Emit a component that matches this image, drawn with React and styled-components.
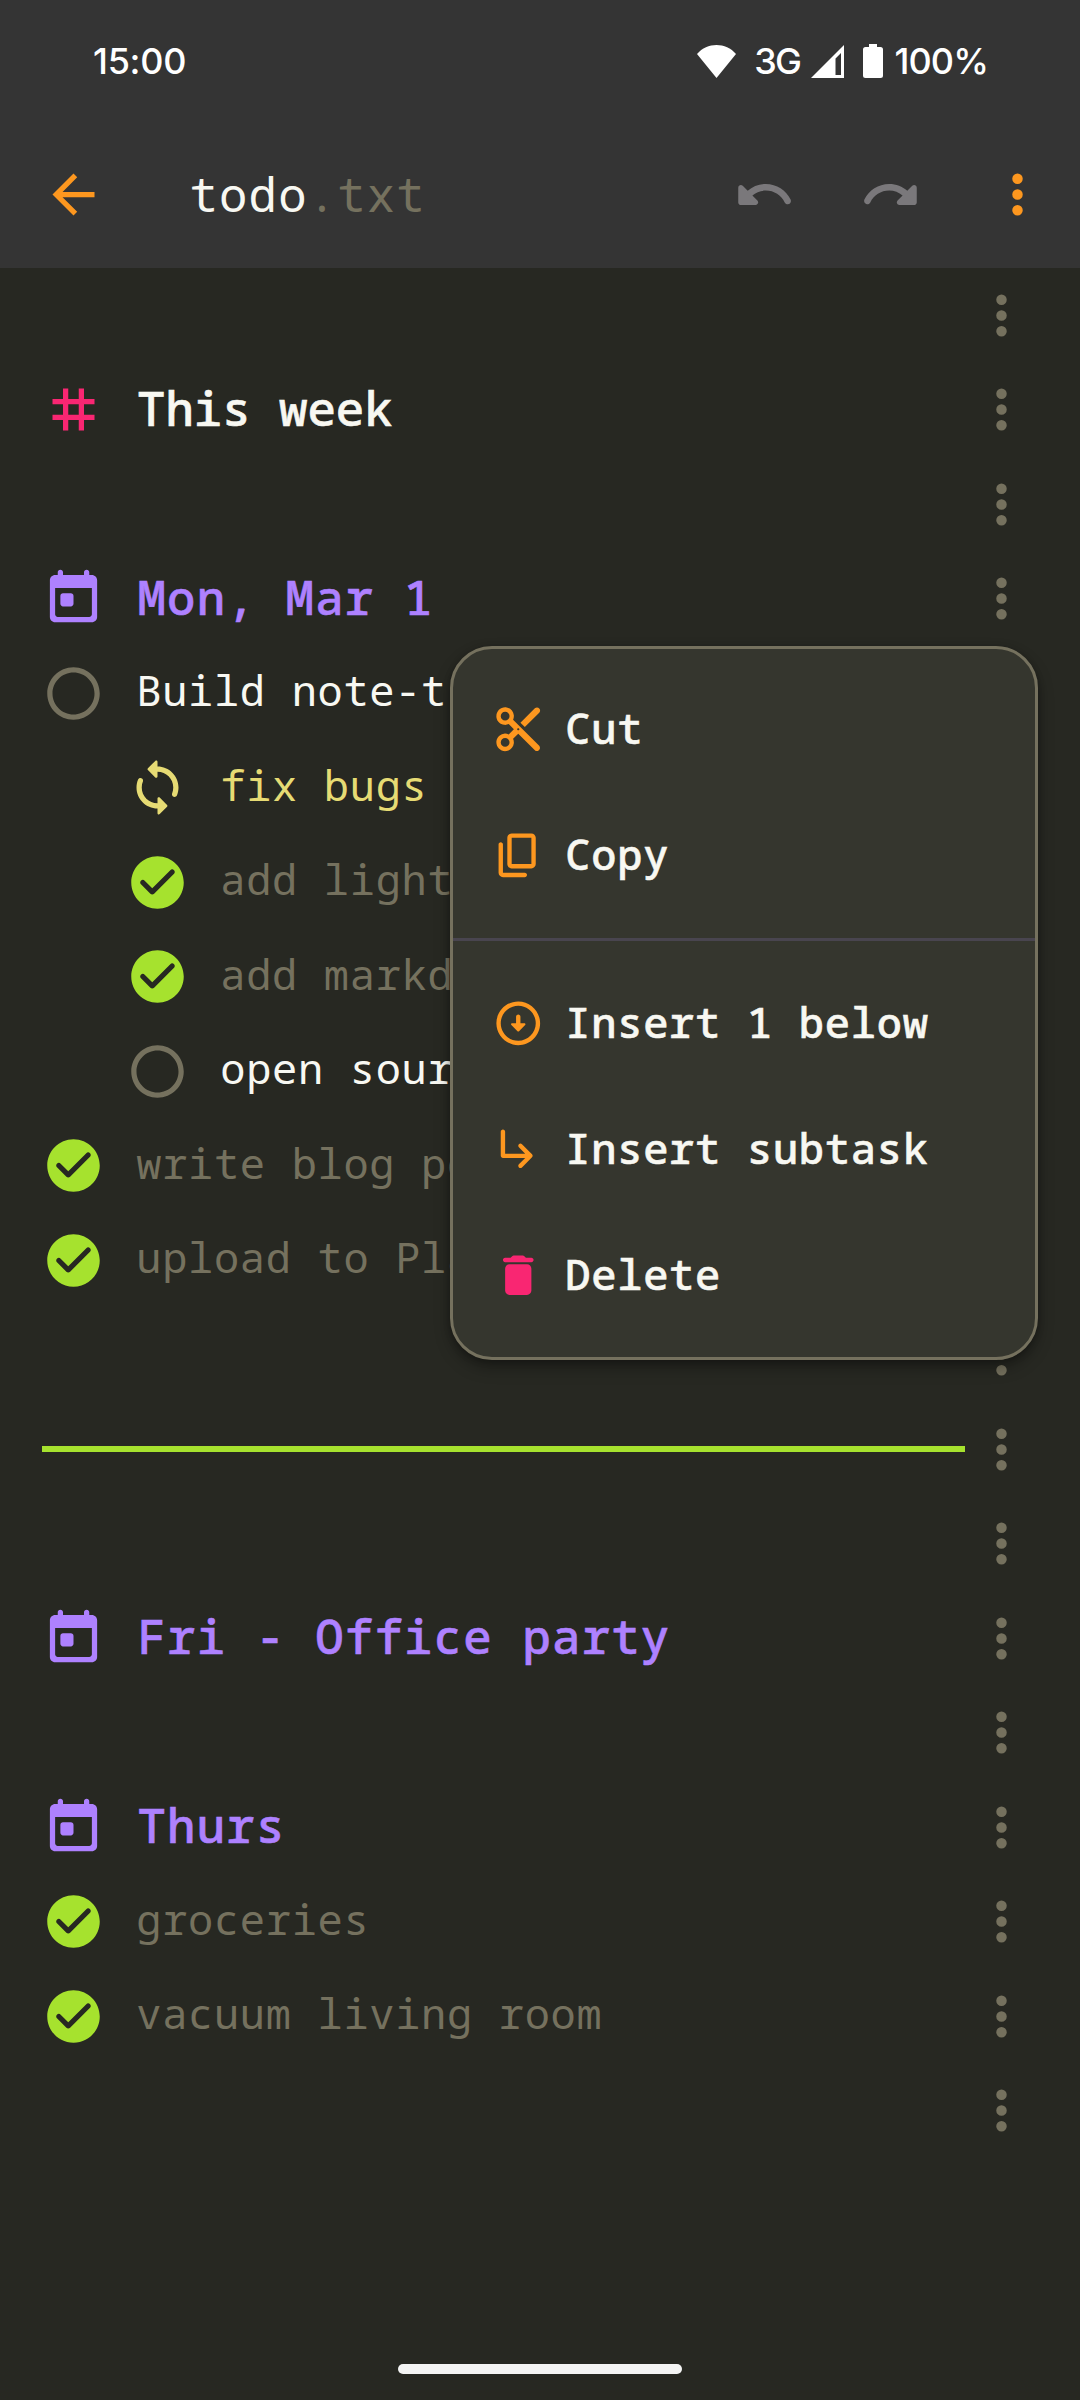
import React from "react";
import styled, { createGlobalStyle, css } from "styled-components";

const color = {
  background: "#272822",
  header: "#343434",
  menu: "#35362e",
  text: "#f8f8f2",
  comment: "#75715e",
  orange: "#fd971f",
  green: "#a6e22e",
  purple: "#ae81ff",
  pink: "#f92672",
  yellow: "#e6db74",
  disabled: "#7a787b",
  separator: "#49454f",
};

const GlobalStyle = createGlobalStyle`
  *, *::before, *::after { box-sizing: border-box; }
  body { margin: 0; background: ${color.background}; }
`;

const mono = css`
  font-family: "Noto Sans Mono", "DejaVu Sans Mono", monospace;
  white-space: pre;
`;

const Screen = styled.div`
  position: relative;
  width: 1080px;
  height: 2400px;
  overflow: hidden;
  display: flex;
  flex-direction: column;
  background: ${color.background};
  color: ${color.text};
`;

const Header = styled.header`
  height: 268px;
  flex: none;
  display: flex;
  flex-direction: column;
  background: ${color.header};
`;

const StatusBar = styled.div`
  height: 121px;
  padding: 1px 92px 0 93px;
  display: flex;
  align-items: center;
  color: #fff;
  font: 500 36px/48px Inter, Roboto, sans-serif;
`;

const Clock = styled.span`
  margin-right: auto;
  letter-spacing: -0.3px;
`;

const StatusIcon = styled.svg`
  display: block;
  flex: none;
  margin-left: ${(p) => p.$gap || 0}px;
  fill: #fff;
`;

const Network = styled.span`
  margin: 0 11px 0 18px;
  letter-spacing: -1.6px;
`;

const Battery = styled.span`
  margin-left: 11px;
  letter-spacing: -0.9px;
`;

const AppBar = styled.div`
  height: 147px;
  display: flex;
  align-items: center;
  padding: 0 31.5px 0 42px;
`;

const Glyph = styled.svg`
  display: block;
  flex: none;
  width: ${(p) => p.$size || 63}px;
  height: ${(p) => p.$size || 63}px;
  fill: ${(p) => p.$color};
`;

const Title = styled.h1`
  ${mono}
  flex: 1;
  margin: 0 0 0 84.5px;
  padding-bottom: 3px;
  font-size: 47.25px;
  font-weight: 400;
  line-height: 63px;
  letter-spacing: 1.2px;
`;

const Extension = styled.span`
  color: ${color.comment};
`;

const Actions = styled.div`
  display: flex;
  gap: 63.2px;
`;

const List = styled.main`
  display: flex;
  flex-direction: column;
`;

const Row = styled.div`
  height: 94.5px;
  flex: none;
  display: flex;
  align-items: center;
  padding-left: ${(p) => 42 + (p.$indent || 0) * 84}px;
  padding-right: 47.5px;
`;

const RowText = styled.span`
  ${mono}
  flex: 1;
  margin-left: 31.3px;
  padding-bottom: 6px;
  font-size: 42px;
  letter-spacing: 0.69px;
  line-height: 60px;
  color: ${(p) => p.$color};
`;

const Heading = styled(RowText).attrs({ as: "h2" })`
  margin: 0 0 0 ${(p) => (p.$wide ? 32.5 : 32)}px;
  padding-bottom: 4px;
  font-size: 47.25px;
  font-weight: 500;
  letter-spacing: ${(p) => (p.$wide ? 1.26 : 0.05)}px;
  line-height: 72px;
  -webkit-text-stroke: 0.6px currentColor;
`;

const Rule = styled.hr`
  flex: 1;
  height: 6px;
  margin: 0 5px 0 0;
  border: 0;
  background: ${color.green};
`;

const Filler = styled.span`
  flex: 1;
`;

const Menu = styled.div`
  position: absolute;
  left: 450px;
  top: 646px;
  width: 588px;
  height: 714px;
  padding: 17.3px 0;
  border: 3px solid ${color.comment};
  border-radius: 42px;
  background: ${color.menu};
  box-shadow: 0 8px 16px rgba(0, 0, 0, 0.3), 0 2px 6px rgba(0, 0, 0, 0.25);
`;

const MenuItem = styled.div`
  height: 126px;
  display: flex;
  align-items: center;
  gap: 20.5px;
  padding-left: 39.3px;
`;

const MenuLabel = styled.span`
  ${mono}
  padding-bottom: 2.5px;
  font-size: 42px;
  font-weight: 500;
  line-height: 60px;
  letter-spacing: 0.75px;
  -webkit-text-stroke: 0.55px currentColor;
`;

const MenuSeparator = styled.div`
  height: 3px;
  margin: 20px 0 19px;
  background: ${color.separator};
`;

const HomeIndicator = styled.div`
  width: 284px;
  height: 10px;
  margin: auto auto 26px;
  border-radius: 5px;
  background: #f4f4f4;
`;

const paths = {
  back: "M20 11H7.83l5.59-5.59L12 4l-8 8 8 8 1.41-1.41L7.83 13H20v-2z",
  more: "M12 8a2 2 0 1 0 0-4 2 2 0 0 0 0 4zm0 2a2 2 0 1 0 0 4 2 2 0 0 0 0-4zm0 6a2 2 0 1 0 0 4 2 2 0 0 0 0-4z",
  undo: "M12.5 8c-2.65 0-5.05.99-6.9 2.6L3.71 8.71C3.08 8.08 2 8.52 2 9.41V15c0 .55.45 1 1 1h5.59c.89 0 1.34-1.08.71-1.71l-1.91-1.91c1.39-1.16 3.16-1.88 5.12-1.88 3.16 0 5.89 1.84 7.19 4.5.27.56.91.84 1.5.64.71-.23 1.07-1.04.75-1.72C20.23 10.42 16.65 8 12.5 8z",
  hash: "M20 10V8h-4V4h-2v4h-4V4H8v4H4v2h4v4H4v2h4v4h2v-4h4v4h2v-4h4v-2h-4v-4h4zm-6 4h-4v-4h4v4z",
  date: "M19 3h-1V2c0-.55-.45-1-1-1s-1 .45-1 1v1H8V2c0-.55-.45-1-1-1s-1 .45-1 1v1H5c-1.11 0-1.99.9-1.99 2L3 19c0 1.1.89 2 2 2h14c1.1 0 2-.9 2-2V5c0-1.1-.9-2-2-2zm-1 16H6c-.55 0-1-.45-1-1V8h14v10c0 .55-.45 1-1 1zM8 10h3c.55 0 1 .45 1 1v3c0 .55-.45 1-1 1H8c-.55 0-1-.45-1-1v-3c0-.55.45-1 1-1z",
  open: "M12 2C6.48 2 2 6.48 2 12s4.48 10 10 10 10-4.48 10-10S17.52 2 12 2zm0 18c-4.42 0-8-3.58-8-8s3.58-8 8-8 8 3.58 8 8-3.58 8-8 8z",
  done: "M12 2C6.48 2 2 6.48 2 12s4.48 10 10 10 10-4.48 10-10S17.52 2 12 2zM9.29 16.29L5.7 12.7c-.39-.39-.39-1.02 0-1.41.39-.39 1.02-.39 1.41 0L10 14.17l6.88-6.88c.39-.39 1.02-.39 1.41 0 .39.39.39 1.02 0 1.41l-7.59 7.59c-.38.39-1.02.39-1.41 0z",
  sync: "M12 4V2.21c0-.45-.54-.67-.85-.35l-2.8 2.79c-.2.2-.2.51 0 .71l2.79 2.79c.32.31.86.09.86-.36V6c3.31 0 6 2.69 6 6 0 .79-.15 1.56-.44 2.25-.15.36-.04.77.23 1.04.51.51 1.37.33 1.64-.34.37-.91.57-1.91.57-2.95 0-4.42-3.58-8-8-8zm0 14c-3.31 0-6-2.69-6-6 0-.79.15-1.56.44-2.25.15-.36.04-.77-.23-1.04-.51-.51-1.37-.33-1.64.34C4.2 9.96 4 10.96 4 12c0 4.42 3.58 8 8 8v1.79c0 .45.54.67.85.35l2.79-2.79c.2-.2.2-.51 0-.71l-2.79-2.79c-.31-.31-.85-.09-.85.36V18z",
  cut: "M9.64 7.64c.29-.62.42-1.33.34-2.09-.19-1.75-1.55-3.25-3.29-3.51C3.91 1.62 1.6 3.95 2.05 6.74c.28 1.72 1.76 3.06 3.5 3.24.76.08 1.46-.05 2.09-.34L10 12l-2.36 2.36c-.63-.29-1.34-.42-2.09-.34-1.74.18-3.22 1.52-3.5 3.24-.45 2.79 1.86 5.12 4.64 4.7 1.74-.26 3.1-1.76 3.29-3.51.08-.76-.05-1.46-.34-2.09L12 14l7.59 7.59c.48.48 1.2.5 1.71.1.85-.65.75-1.35.29-2.1L9.64 7.64zM6 8c-1.1 0-2-.89-2-2s.9-2 2-2 2 .89 2 2-.9 2-2 2zm0 12c-1.1 0-2-.89-2-2s.9-2 2-2 2 .89 2 2-.9 2-2 2zm6-7.5c-.28 0-.5-.22-.5-.5s.22-.5.5-.5.5.22.5.5-.22.5-.5.5zM19.59 2.41L13 9l2 2 6.59-6.59c.48-.48.55-1.3.1-1.8-.55-.68-1.4-.8-2.1-.2z",
  copy: "M15 20H5V7c0-.55-.45-1-1-1s-1 .45-1 1v13c0 1.1.9 2 2 2h10c.55 0 1-.45 1-1s-.45-1-1-1zm5-4V4c0-1.1-.9-2-2-2H9c-1.1 0-2 .9-2 2v12c0 1.1.9 2 2 2h9c1.1 0 2-.9 2-2zm-2 0H9V4h9v12z",
  insert: "M12 4c4.41 0 8 3.59 8 8s-3.59 8-8 8-8-3.59-8-8 3.59-8 8-8m0-2C6.48 2 2 6.48 2 12s4.48 10 10 10 10-4.48 10-10S17.52 2 12 2zm1 10V9c0-.55-.45-1-1-1s-1 .45-1 1v3H9.21c-.45 0-.67.54-.35.85l2.79 2.79c.2.2.51.2.71 0l2.79-2.79c.31-.31.09-.85-.35-.85H13z",
  subtask: "M18.29 15.71l-4.58 4.58c-.39.39-1.03.39-1.42 0-.39-.39-.39-1.03 0-1.42L15.17 16H5c-.55 0-1-.45-1-1V4c0-.55.45-1 1-1s1 .45 1 1v10h9.17l-2.88-2.87c-.39-.39-.39-1.03 0-1.42.39-.39 1.03-.39 1.42 0l4.58 4.58c.39.39.39 1.03 0 1.42z",
  remove: "M6 19c0 1.1.9 2 2 2h8c1.1 0 2-.9 2-2V9c0-1.1-.9-2-2-2H8c-1.1 0-2 .9-2 2v10zM18 4h-2.5l-.71-.71c-.18-.18-.44-.29-.7-.29H9.91c-.26 0-.52.11-.7.29L8.5 4H6c-.55 0-1 .45-1 1s.45 1 1 1h12c.55 0 1-.45 1-1s-.45-1-1-1z",
};

const Icon = ({ name, tint, size, flip }) => (
  <Glyph viewBox="0 0 24 24" $size={size} $color={tint} aria-hidden="true">
    <path d={paths[name]} transform={flip ? "matrix(-1 0 0 1 24 0)" : undefined} />
  </Glyph>
);

const markers = {
  open: { tint: color.comment, text: color.text },
  done: { tint: color.green, text: color.comment },
  sync: { tint: color.yellow, text: color.yellow },
  hash: { tint: color.pink, text: color.text, heading: true },
  date: { tint: color.purple, text: color.purple, heading: true },
};

const lines = [
  {},
  { kind: "hash", text: "This week" },
  {},
  { kind: "date", text: "Mon, Mar 1" },
  { kind: "open", text: "Build note-t" },
  { kind: "sync", text: "fix bugs", indent: 1 },
  { kind: "done", text: "add light", indent: 1 },
  { kind: "done", text: "add markd", indent: 1 },
  { kind: "open", text: "open sour", indent: 1 },
  { kind: "done", text: "write blog po" },
  { kind: "done", text: "upload to Pla" },
  {},
  { kind: "rule" },
  {},
  { kind: "date", text: "Fri - Office party" },
  {},
  { kind: "date", text: "Thurs" },
  { kind: "done", text: "groceries" },
  { kind: "done", text: "vacuum living room" },
  {},
];

function Line({ kind, text, indent }) {
  const marker = markers[kind];
  const Label = marker && marker.heading ? Heading : RowText;
  return (
    <Row $indent={indent}>
      {kind === "rule" && <Rule />}
      {!kind && <Filler />}
      {marker && (
        <>
          <Icon name={kind} tint={marker.tint} />
          <Label $color={marker.text} $wide={kind === "date"}>{text}</Label>
        </>
      )}
      <Icon name="more" tint={color.comment} />
    </Row>
  );
}

const Action = ({ icon, tint = color.orange, children }) => (
  <MenuItem role="menuitem">
    <Icon name={icon} tint={tint} size={52.5} />
    <MenuLabel>{children}</MenuLabel>
  </MenuItem>
);

function ContextMenu() {
  return (
    <Menu role="menu">
      <Action icon="cut">Cut</Action>
      <Action icon="copy">Copy</Action>
      <MenuSeparator />
      <Action icon="insert">Insert 1 below</Action>
      <Action icon="subtask">Insert subtask</Action>
      <Action icon="remove" tint={color.pink}>Delete</Action>
    </Menu>
  );
}

export default function App() {
  return (
    <>
      <GlobalStyle />
      <Screen>
        <Header>
          <StatusBar>
            <Clock>15:00</Clock>
            <StatusIcon width="39" height="33" viewBox="0 0 39 33">
              <path d="M0 9C10-3 29-3 39 9L19.5 33z" />
            </StatusIcon>
            <Network>3G</Network>
            <StatusIcon width="33" height="33" viewBox="0 0 33 33">
              <path fillRule="evenodd" d="M33 0v33H0zM30 8l-5.5 5.5V30H30z" />
            </StatusIcon>
            <StatusIcon width="20" height="34" viewBox="0 0 20 34" $gap={19}>
              <path d="M6 0h8v3h3.5Q20 3 20 5.5v26Q20 34 17.5 34h-15Q0 34 0 31.5v-26Q0 3 2.5 3H6z" />
            </StatusIcon>
            <Battery>100%</Battery>
          </StatusBar>
          <AppBar>
            <Icon name="back" tint={color.orange} />
            <Title>todo<Extension>.txt</Extension></Title>
            <Actions>
              <Icon name="undo" tint={color.disabled} />
              <Icon name="undo" tint={color.disabled} flip />
              <Icon name="more" tint={color.orange} />
            </Actions>
          </AppBar>
        </Header>
        <List>
          {lines.map((line, i) => (
            <Line key={i} {...line} />
          ))}
        </List>
        <HomeIndicator />
        <ContextMenu />
      </Screen>
    </>
  );
}
